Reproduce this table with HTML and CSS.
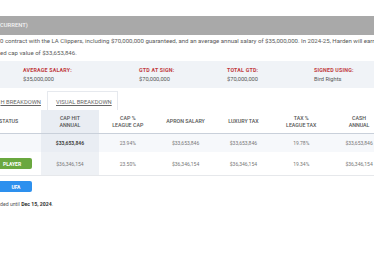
FILE: index.html
```html
<!DOCTYPE html>
<html>
<head>
<meta charset="utf-8">
<link rel="stylesheet" href="styles.css">
</head>
<body>
<div class="page">
  <div class="bar">(CURRENT)</div>
  <p class="desc">0 contract with the LA Clippers, including $70,000,000 guaranteed, and an average annual salary of $35,000,000. In 2024-25, Harden will earn $33,653,846<br>ed cap value of $33,653,846.</p>
  <div class="stats">
    <div class="stat"><div class="label">Average Salary:</div><div class="value">$35,000,000</div></div>
    <div class="stat"><div class="label">GTD at Sign:</div><div class="value">$70,000,000</div></div>
    <div class="stat"><div class="label">Total GTD:</div><div class="value">$70,000,000</div></div>
    <div class="stat"><div class="label">Signed Using:</div><div class="value">Bird Rights</div></div>
  </div>
  <div class="tabs">
    <div class="tab first"><span>H Breakdown</span></div>
    <div class="tab active"><span>Visual Breakdown</span></div>
  </div>
  <table class="grid">
    <colgroup>
      <col class="c-status"><col class="c"><col class="c"><col class="c"><col class="c"><col class="c"><col class="c">
    </colgroup>
    <thead>
      <tr>
        <th class="left">Status</th>
        <th class="hl">Cap Hit<br>Annual</th>
        <th>Cap %<br>League Cap</th>
        <th>Apron Salary</th>
        <th>Luxury Tax</th>
        <th>Tax %<br>League Tax</th>
        <th>Cash<br>Annual</th>
      </tr>
    </thead>
    <tbody>
      <tr class="r1">
        <td class="left"></td>
        <td class="hl strong">$33,653,846</td>
        <td>23.94%</td>
        <td>$33,653,846</td>
        <td>$33,653,846</td>
        <td>19.78%</td>
        <td>$33,653,846</td>
      </tr>
      <tr class="r2">
        <td class="left"><span class="badge player">Player</span></td>
        <td class="hl">$36,346,154</td>
        <td>23.50%</td>
        <td>$36,346,154</td>
        <td>$36,346,154</td>
        <td>19.34%</td>
        <td>$36,346,154</td>
      </tr>
    </tbody>
  </table>
  <div class="ufa-row"><span class="badge ufa">UFA</span></div>
  <p class="note">ded until <b>Dec 15, 2024</b>.</p>
</div>
</body>
</html>
```
FILE: styles.css
```css
html, body {
  margin: 0;
  padding: 0;
  background: #fff;
}
body {
  font-family: Roboto, "Liberation Sans", sans-serif;
  color: #555;
  overflow: hidden;
}
.page {
  width: 374px;
  height: 260px;
  overflow: hidden;
  padding-top: 16px;
  box-sizing: border-box;
}
.bar {
  height: 19px;
  line-height: 19px;
  background: #a9a9a9;
  color: #f4f4f4;
  font-size: 5.8px;
  font-weight: 500;
  text-indent: -2px;
  white-space: nowrap;
}
.desc {
  margin: 0;
  font-size: 6.05px;
  line-height: 12px;
  color: #5a5a5a;
  white-space: nowrap;
}
.stats {
  margin-top: 2px;
  background: #f0f3f7;
  height: 27px;
  display: grid;
  grid-template-columns: 116px 88px 87px auto;
  padding-left: 23px;
  align-content: center;
}
.label {
  font-size: 5.3px;
  font-weight: 700;
  color: #c0393d;
  text-transform: uppercase;
  letter-spacing: 0.2px;
  line-height: 8px;
}
.value {
  font-size: 5.7px;
  color: #555;
  line-height: 10px;
}
.tabs {
  display: flex;
  height: 19px;
  margin-top: 3px;
}
.tab {
  display: flex;
  align-items: center;
  font-size: 5.8px;
  text-transform: uppercase;
  color: #666;
  white-space: nowrap;
  padding-top: 2px;
  box-sizing: border-box;
}
.tab span {
  text-decoration: underline;
  text-underline-offset: 1px;
}
.tab.first {
  width: 47px;
  justify-content: flex-end;
  padding-right: 6px;
}
.tab.active {
  width: 71px;
  padding-left: 8px;
  border: 1px solid #e6e9ee;
  border-bottom: none;
  background: #fff;
}
.grid {
  border-collapse: collapse;
  table-layout: fixed;
  width: 388px;
}
.c-status { width: 41px; }
.c { width: 57.8px; }
.grid th {
  height: 23px;
  font-size: 5.3px;
  font-weight: 500;
  color: #555;
  text-transform: uppercase;
  line-height: 7px;
  text-align: center;
  padding: 0;
  border-bottom: 1px solid #c9d0da;
}
.grid th.left {
  text-align: left;
  text-indent: -1px;
}
.grid td {
  padding: 0;
  text-align: center;
  font-size: 5px;
  color: #777;
}
.grid td.left {
  text-align: left;
}
.r1 td {
  height: 18px;
  background: #f6f8fb;
}
.r2 td {
  height: 23px;
  border-bottom: 1px solid #e6e8eb;
}
.grid th.hl { background: #e9edf3; }
.r1 td.hl { background: #e9edf3; }
.r2 td.hl { background: #eef1f5; }
.strong { font-weight: 700; color: #444 !important; }
.badge {
  display: inline-flex;
  align-items: center;
  justify-content: center;
  width: 32px;
  height: 11px;
  border-radius: 0 2px 2px 0;
  color: #fff;
  font-size: 5px;
  font-weight: 700;
  text-transform: uppercase;
  vertical-align: middle;
}
.player {
  background: #6aa83f;
  justify-content: flex-start;
  padding-left: 3px;
  box-sizing: border-box;
}
.ufa-row {
  margin-top: 5px;
  height: 11px;
  display: flex;
}
.ufa {
  background: #2d90ee;
  height: 11px;
}
.note {
  margin: 8px 0 0;
  font-size: 5.2px;
  color: #555;
  line-height: 8px;
}
.note b { color: #333; }
```
